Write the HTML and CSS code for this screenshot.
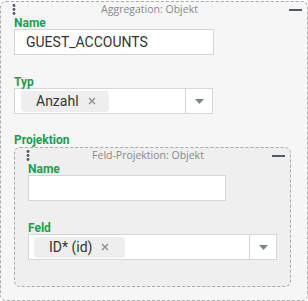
FILE: index.html
```html
<!DOCTYPE html>
<html lang="de">
<head>
<meta charset="utf-8">
<link rel="stylesheet" href="styles.css">
</head>
<body>
<div class="panel outer">
  <div class="head">
    <svg class="handle" width="4" height="11" viewBox="0 0 4 11"><circle cx="2" cy="1.5" r="1.4"/><circle cx="2" cy="5.5" r="1.4"/><circle cx="2" cy="9.5" r="1.4"/></svg>
    <div class="title">Aggregation: Objekt</div>
    <div class="minus"></div>
  </div>
  <div class="label">Name</div>
  <div class="input w200">GUEST_ACCOUNTS</div>
  <div class="label gap21">Typ</div>
  <div class="select w199">
    <div class="tags"><span class="tag tag-a">Anzahl<svg class="x" width="8" height="8" viewBox="0 0 8 8"><path d="M1 1L7 7M7 1L1 7"/></svg></span></div>
    <div class="arrow"><svg width="9" height="5" viewBox="0 0 9 5"><path d="M0 0H9L4.5 5Z"/></svg></div>
  </div>
  <div class="label gap20 mb1">Projektion</div>
  <div class="panel inner">
    <div class="head">
      <svg class="handle" width="4" height="11" viewBox="0 0 4 11"><circle cx="2" cy="1.5" r="1.4"/><circle cx="2" cy="5.5" r="1.4"/><circle cx="2" cy="9.5" r="1.4"/></svg>
      <div class="title">Feld-Projektion: Objekt</div>
      <div class="minus"></div>
    </div>
    <div class="label">Name</div>
    <div class="input w198"></div>
    <div class="label gap21">Feld</div>
    <div class="select wfull">
      <div class="tags"><span class="tag tag-b">ID* (id)<svg class="x" width="8" height="8" viewBox="0 0 8 8"><path d="M1 1L7 7M7 1L1 7"/></svg></span></div>
      <div class="arrow"><svg width="9" height="5" viewBox="0 0 9 5"><path d="M0 0H9L4.5 5Z"/></svg></div>
    </div>
  </div>
</div>
</body>
</html>
```
FILE: styles.css
```css
* { box-sizing: border-box; }
html, body { margin: 0; padding: 0; background: #fff; }
body { padding-top: 1px; font-family: Roboto, "Liberation Sans", sans-serif; color: #333; }

.panel {
  border: 1px dashed #a9a9a9;
  border-radius: 6px;
}
.outer {
  width: 308px;
  height: 300px;
  background: #f6f6f6;
  padding: 0 13px 12px 13px;
}
.inner {
  width: 277px;
  background: #efefef;
  padding: 0 13px 26px 13px;
}

.head {
  height: 15px;
  display: flex;
  align-items: flex-start;
}
.handle {
  fill: #4d5560;
  margin: 2px 0 0 -2px;
  flex: none;
}
.title {
  flex: 1;
  text-align: center;
  font-family: "Open Sans", sans-serif;
  font-size: 10.5px;
  line-height: 13px;
  color: #8a8a8a;
  padding-right: 6px;
  margin-top: 1px;
}
.minus {
  flex: none;
  width: 13px;
  height: 2px;
  background: #505a63;
  margin-top: 7px;
  margin-right: -8px;
}
.inner .minus { margin-right: -8px; }

.label {
  font-size: 12px;
  line-height: 12px;
  font-weight: 700;
  color: #16a04e;
}
.gap21 { margin-top: 21px; }
.gap20 { margin-top: 20px; }
.mb1 { margin-bottom: 1px; }

.input {
  height: 26px;
  background: #fff;
  border: 1px solid #d6d6d6;
  font-size: 14px;
  line-height: 24px;
  padding-left: 11px;
  color: #333;
}
.w200 { width: 200px; }
.w198 { width: 198px; }
.w199 { width: 199px; }
.wfull { width: 100%; }

.select {
  height: 26px;
  background: #fff;
  border: 1px solid #d6d6d6;
  display: flex;
}
.tags {
  flex: 1;
  display: flex;
  align-items: center;
  padding-left: 6px;
}
.inner .tags { padding-left: 5px; }
.tag {
  display: inline-flex;
  align-items: center;
  height: 21px;
  background: #eeeeee;
  border-radius: 4px;
  font-size: 14px;
  color: #333;
}
.tag-a { width: 88px; padding-left: 15px; }
.tag-b { width: 91px; padding-left: 15px; }
.x {
  margin-left: 9px;
  stroke: #8c8c8c;
  stroke-width: 1.4;
  fill: none;
}
.arrow {
  flex: none;
  width: 27px;
  border-left: 1px solid #d6d6d6;
  display: flex;
  align-items: center;
  justify-content: center;
}
.arrow svg { fill: #7b858c; margin-left: 1px; }
```
